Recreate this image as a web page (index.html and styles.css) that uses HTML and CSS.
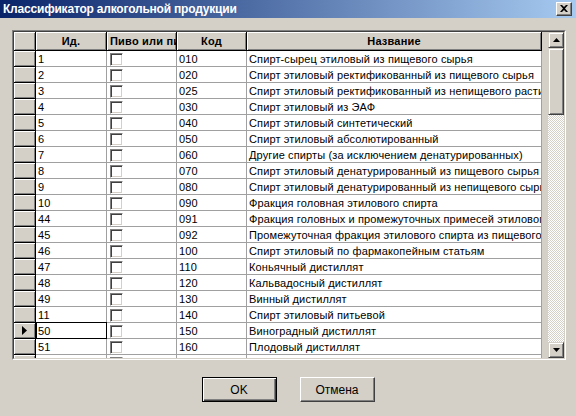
FILE: index.html
```html
<!DOCTYPE html>
<html lang="ru">
<head>
  <meta charset="UTF-8">
  <title>Классификатор алкогольной продукции</title>
  <link rel="stylesheet" href="styles.css">
</head>
<body>
  <div class="titlebar">
    <span class="caption">Классификатор алкогольной продукции</span>
    <button class="close-btn" type="button">
      <svg width="8" height="7" viewBox="0 0 8 7"><path d="M0 0h2l2 2 2-2h2L5 3.5 8 7H6L4 5 2 7H0l3-3.5z" fill="#000"/></svg>
    </button>
  </div>

  <!-- сетка справочника -->
  <div class="grid">
    <div class="grid-inner">
      <div class="grid-view">
        <table class="data">
          <colgroup>
            <col class="c-ind"><col class="c-id"><col class="c-beer"><col class="c-code"><col class="c-name">
          </colgroup>
          <thead>
            <tr>
              <th class="fixed"></th>
              <th class="fixed">Ид.</th>
              <th class="fixed left">Пиво или пивной напиток</th>
              <th class="fixed">Код</th>
              <th class="fixed">Название</th>
            </tr>
          </thead>
          <tbody>
            <tr><td class="fixed"></td><td>1</td><td><span class="check"></span></td><td>010</td><td>Спирт-сырец этиловый из пищевого сырья</td></tr>
            <tr><td class="fixed"></td><td>2</td><td><span class="check"></span></td><td>020</td><td>Спирт этиловый ректификованный из пищевого сырья</td></tr>
            <tr><td class="fixed"></td><td>3</td><td><span class="check"></span></td><td>025</td><td>Спирт этиловый ректификованный из непищевого растительного сырья</td></tr>
            <tr><td class="fixed"></td><td>4</td><td><span class="check"></span></td><td>030</td><td>Спирт этиловый из ЭАФ</td></tr>
            <tr><td class="fixed"></td><td>5</td><td><span class="check"></span></td><td>040</td><td>Спирт этиловый синтетический</td></tr>
            <tr><td class="fixed"></td><td>6</td><td><span class="check"></span></td><td>050</td><td>Спирт этиловый абсолютированный</td></tr>
            <tr><td class="fixed"></td><td>7</td><td><span class="check"></span></td><td>060</td><td>Другие спирты (за исключением денатурированных)</td></tr>
            <tr><td class="fixed"></td><td>8</td><td><span class="check"></span></td><td>070</td><td>Спирт этиловый денатурированный из пищевого сырья</td></tr>
            <tr><td class="fixed"></td><td>9</td><td><span class="check"></span></td><td>080</td><td>Спирт этиловый денатурированный из непищевого сырья</td></tr>
            <tr><td class="fixed"></td><td>10</td><td><span class="check"></span></td><td>090</td><td>Фракция головная этилового спирта</td></tr>
            <tr><td class="fixed"></td><td>44</td><td><span class="check"></span></td><td>091</td><td>Фракция головных и промежуточных примесей этилового спирта</td></tr>
            <tr><td class="fixed"></td><td>45</td><td><span class="check"></span></td><td>092</td><td>Промежуточная фракция этилового спирта из пищевого сырья</td></tr>
            <tr><td class="fixed"></td><td>46</td><td><span class="check"></span></td><td>100</td><td>Спирт этиловый по фармакопейным статьям</td></tr>
            <tr><td class="fixed"></td><td>47</td><td><span class="check"></span></td><td>110</td><td>Коньячный дистиллят</td></tr>
            <tr><td class="fixed"></td><td>48</td><td><span class="check"></span></td><td>120</td><td>Кальвадосный дистиллят</td></tr>
            <tr><td class="fixed"></td><td>49</td><td><span class="check"></span></td><td>130</td><td>Винный дистиллят</td></tr>
            <tr><td class="fixed"></td><td>11</td><td><span class="check"></span></td><td>140</td><td>Спирт этиловый питьевой</td></tr>
            <tr class="current">
              <td class="fixed"><svg class="marker" width="5" height="9" viewBox="0 0 5 9"><path d="M0 0l5 4.5L0 9z" fill="#000"/></svg></td>
              <td class="focused">50</td><td><span class="check"></span></td><td>150</td><td>Виноградный дистиллят</td>
            </tr>
            <tr><td class="fixed"></td><td>51</td><td><span class="check"></span></td><td>160</td><td>Плодовый дистиллят</td></tr>
            <tr><td class="fixed"></td><td>52</td><td><span class="check"></span></td><td>170</td><td>Зерновой дистиллят</td></tr>
          </tbody>
        </table>
      </div>

      <div class="scrollbar">
        <div class="sb-btn">
          <svg width="7" height="4" viewBox="0 0 7 4"><path d="M3.5 0L7 4H0z" fill="#000"/></svg>
        </div>
        <div class="sb-track">
          <div class="sb-thumb"></div>
        </div>
        <div class="sb-btn">
          <svg width="7" height="4" viewBox="0 0 7 4"><path d="M0 0h7L3.5 4z" fill="#000"/></svg>
        </div>
      </div>
    </div>
  </div>

  <div class="buttons">
    <button class="btn default" type="button">OK</button>
    <button class="btn" type="button">Отмена</button>
  </div>
</body>
</html>
```

FILE: styles.css
```css
* {
  margin: 0;
  padding: 0;
  box-sizing: border-box;
}

body {
  width: 576px;
  height: 416px;
  overflow: hidden;
  background: #d4d0c8;
  color: #000;
  font-family: "Liberation Sans", Arial, sans-serif;
  font-size: 11px;
}

/* заголовок окна */
.titlebar {
  height: 18px;
  display: flex;
  align-items: center;
  justify-content: space-between;
  padding: 0 4px 0 3px;
  background: linear-gradient(90deg, #0a246a, #a6caf0);
  color: #fff;
  font-weight: bold;
  font-size: 12px;
  letter-spacing: -0.2px;
}

.close-btn {
  width: 16px;
  height: 14px;
  display: flex;
  align-items: center;
  justify-content: center;
  background: #d4d0c8;
  border: 1px solid;
  border-color: #fff #404040 #404040 #fff;
  box-shadow: inset -1px -1px 0 #808080;
  padding: 0 1px 1px 0;
}

/* рамка сетки (утопленная) */
.grid {
  margin: 12px 0 0 12px;
  width: 554px;
  height: 330px;
  border: 1px solid;
  border-color: #808080 #fff #fff #808080;
}

.grid-inner {
  height: 100%;
  display: flex;
  border: 1px solid;
  border-color: #404040 #d4d0c8 #d4d0c8 #404040;
}

.grid-view {
  flex: 1;
  overflow: hidden;
  background: #d4d0c8;
}

.data {
  width: 528px;
  table-layout: fixed;
  border-spacing: 0;
  letter-spacing: 0.12px;
}

.c-ind { width: 22px; }
.c-id { width: 71px; }
.c-beer { width: 70px; }
.c-code { width: 70px; }
.c-name { width: 295px; }

.data th,
.data td {
  padding: 0 2px;
  border-right: 1px solid #a0a0a0;
  border-bottom: 1px solid #a0a0a0;
  background: #fff;
  white-space: nowrap;
  overflow: hidden;
  text-align: left;
  font-weight: normal;
  line-height: 14px;
}

.data thead tr { height: 19px; }
.data tbody tr { height: 16px; }

/* фиксированные ячейки: заголовки и индикатор */
.data .fixed {
  background: #d4d0c8;
  border-color: #000;
  box-shadow: inset 1px 1px 0 #fff, inset -1px -1px 0 #808080;
}

.data th {
  text-align: center;
  font-weight: bold;
  letter-spacing: 0.2px;
}

.data th.left {
  text-align: left;
  padding-left: 3px;
}

.marker {
  display: block;
  margin-left: 6px;
}

.data td.focused {
  position: relative;
  overflow: visible;
}

.data td.focused::after {
  content: '';
  position: absolute;
  top: -1px;
  left: 0;
  right: -1px;
  bottom: -1px;
  border: 1px solid #000;
}

/* флажок в ячейке */
.check {
  display: block;
  width: 13px;
  height: 13px;
  margin: 1px 0 0 1px;
  background: #fff;
  border: 1px solid;
  border-color: #808080 #fff #fff #808080;
  box-shadow: inset 1px 1px 0 #404040, inset -1px -1px 0 #d4d0c8;
}

/* полоса прокрутки */
.scrollbar {
  width: 16px;
  display: flex;
  flex-direction: column;
}

.sb-btn,
.sb-thumb {
  background: #d4d0c8;
  border: 1px solid;
  border-color: #d4d0c8 #404040 #404040 #d4d0c8;
  box-shadow: inset 1px 1px 0 #fff, inset -1px -1px 0 #808080;
}

.sb-btn {
  height: 16px;
  display: flex;
  align-items: center;
  justify-content: center;
}

.sb-track {
  flex: 1;
  background: repeating-conic-gradient(#fff 0 25%, #d4d0c8 0 50%) 0 0 / 2px 2px;
}

.sb-thumb {
  height: 67px;
}

/* кнопки диалога */
.buttons {
  display: flex;
  justify-content: center;
  gap: 23px;
  margin-top: 17px;
}

.btn {
  width: 75px;
  height: 25px;
  background: #d4d0c8;
  font-family: "Liberation Sans", Arial, sans-serif;
  font-size: 12px;
  color: #000;
  border: 1px solid;
  border-color: #fff #404040 #404040 #fff;
  box-shadow: inset -1px -1px 0 #808080;
}

.btn.default {
  border-color: #000;
  box-shadow: inset 1px 1px 0 #fff, inset -1px -1px 0 #404040, inset -2px -2px 0 #808080;
}
```
